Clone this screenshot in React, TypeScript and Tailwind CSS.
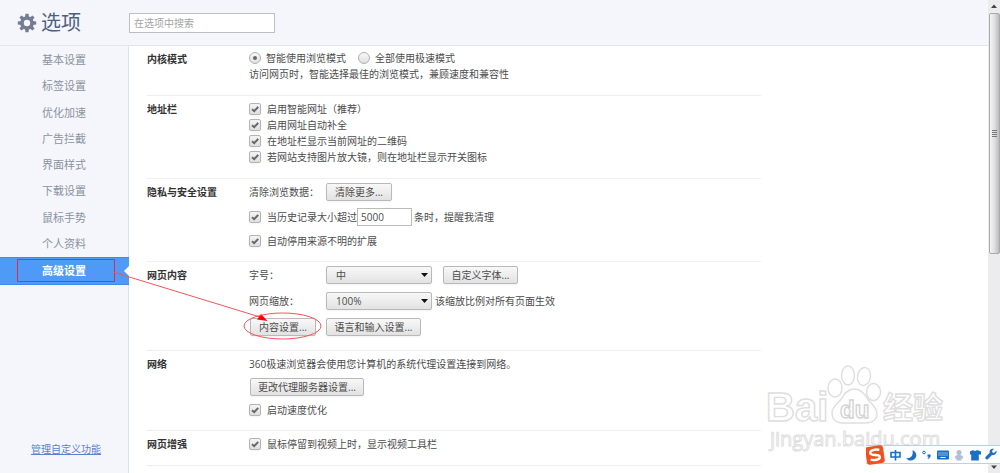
import type { ReactNode } from 'react';
import clsx from 'clsx';

const NAV_ITEMS = [
  '基本设置',
  '标签设置',
  '优化加速',
  '广告拦截',
  '界面样式',
  '下载设置',
  '鼠标手势',
  '个人资料',
  '高级设置',
];

const ACTIVE_ITEM = '高级设置';

const GEAR_TEETH = [0, 45, 90, 135, 180, 225, 270, 315];

function GearIcon() {
  return (
    <svg viewBox="0 0 20 20" className="size-5 shrink-0" aria-hidden="true">
      <g fill="#737c91">
        {GEAR_TEETH.map((angle) => (
          <path key={angle} d="M8 4.5 8.5 0.8h3L12 4.5z" transform={`rotate(${angle} 10 10)`} />
        ))}
      </g>
      <circle cx="10" cy="10" r="5" fill="none" stroke="#737c91" strokeWidth="3.6" />
    </svg>
  );
}

interface SectionProps {
  title: string;
  className?: string;
  children: ReactNode;
}

function Section({ title, className, children }: SectionProps) {
  return (
    <section className="flex border-b border-[#eeeff1]">
      <h2 className="w-[102px] shrink-0 pt-[5px] font-bold text-[#333]">{title}</h2>
      <div className={clsx('flex min-w-0 flex-1 flex-col items-start', className)}>{children}</div>
    </section>
  );
}

function Check({ children }: { children: ReactNode }) {
  return (
    <label className="flex h-4 items-center gap-[6px] whitespace-nowrap">
      <span className="relative size-3 shrink-0">
        <input
          type="checkbox"
          defaultChecked
          className="peer block size-3 appearance-none rounded-xs border border-[#b4b4b4] bg-linear-to-b from-[#f4f4f4] to-[#dedede] shadow-xs"
        />
        <svg viewBox="0 0 12 12" className="pointer-events-none absolute inset-0 hidden size-3 peer-checked:block">
          <path d="M3 6.2 5.2 8.2 9.2 3.8" fill="none" stroke="#666" strokeWidth="2" />
        </svg>
      </span>
      {children}
    </label>
  );
}

function Radio({ checked, children }: { checked?: boolean; children: ReactNode }) {
  return (
    <label className="flex h-4 items-center gap-[5px] whitespace-nowrap">
      <span className="relative size-3 shrink-0">
        <input
          type="radio"
          name="core-mode"
          defaultChecked={checked}
          className="peer block size-3 appearance-none rounded-full border border-[#b0b0b0] bg-linear-to-b from-[#f8f8f8] to-[#e0e0e0]"
        />
        <span className="pointer-events-none absolute inset-1 hidden rounded-full bg-[#666] peer-checked:block" />
      </span>
      {children}
    </label>
  );
}

function PushButton({ className, children }: { className?: string; children: ReactNode }) {
  return (
    <button
      type="button"
      className={clsx(
        'h-[18px] shrink-0 rounded-xs border border-[#b9b9b9] bg-linear-to-b from-[#f8f8f8] to-[#e2e2e2] text-center leading-4 whitespace-nowrap shadow-xs',
        className,
      )}
    >
      {children}
    </button>
  );
}

interface DropdownProps {
  id: string;
  label: string;
  options: string[];
}

function Dropdown({ id, label, options }: DropdownProps) {
  return (
    <>
      <label htmlFor={id} className="w-[77px] shrink-0">
        {label}
      </label>
      <span className="relative w-[106px] shrink-0">
        <select
          id={id}
          className="block h-[18px] w-full appearance-none rounded-xs border border-[#b9b9b9] bg-linear-to-b from-[#f8f8f8] to-[#e2e2e2] pl-[9px] leading-4 shadow-xs"
        >
          {options.map((option) => (
            <option key={option}>{option}</option>
          ))}
        </select>
        <svg viewBox="0 0 7 4" className="pointer-events-none absolute top-[7px] right-1 h-1 w-[7px]">
          <path d="M0 0h7L3.5 4z" fill="#111" />
        </svg>
      </span>
    </>
  );
}

function Sidebar() {
  return (
    <aside className="flex w-[129px] shrink-0 flex-col bg-[#f4f6fb] pt-px shadow-[inset_-1px_0_0_#dde2ea]">
      <nav>
        <ul className="flex h-[238px] flex-col justify-between">
          {NAV_ITEMS.map((item) => (
            <li key={item}>
              <a
                href="#"
                className={clsx(
                  'relative block pl-[42px] text-[11px] leading-[26px]',
                  item === ACTIVE_ITEM
                    ? 'border-y border-[#3f8aea] bg-[#509af7] font-bold text-white'
                    : 'text-[#8b93a1]',
                )}
              >
                {item}
                {item === ACTIVE_ITEM && (
                  <svg viewBox="0 0 5 10" className="absolute top-2 right-0 h-[10px] w-[5px]">
                    <path d="M5 0v10L0 5z" fill="#fff" />
                  </svg>
                )}
              </a>
            </li>
          ))}
        </ul>
      </nav>
      <a href="#" className="mt-auto mb-4 pl-[31px] text-[#5b7fd3] underline">
        管理自定义功能
      </a>
    </aside>
  );
}

function Settings() {
  return (
    <main className="min-w-0 flex-1 overflow-hidden pl-[18px]">
      <div className="max-w-[614px]">
        <Section title="内核模式" className="pt-1 pb-[13px]">
          <div className="flex gap-3">
            <Radio checked>智能使用浏览模式</Radio>
            <Radio>全部使用极速模式</Radio>
          </div>
          <p>访问网页时，智能选择最佳的浏览模式，兼顾速度和兼容性</p>
        </Section>

        <Section title="地址栏" className="pt-[5px] pb-[13px]">
          <Check>启用智能网址（推荐）</Check>
          <Check>启用网址自动补全</Check>
          <Check>在地址栏显示当前网址的二维码</Check>
          <Check>若网站支持图片放大镜，则在地址栏显示开关图标</Check>
        </Section>

        <Section title="隐私与安全设置" className="gap-[7px] pt-1 pb-3">
          <div className="flex items-center">
            <span className="w-[77px] shrink-0">清除浏览数据：</span>
            <PushButton className="w-[66px]">清除更多...</PushButton>
          </div>
          <div className="flex items-center">
            <Check>当历史记录大小超过</Check>
            <input
              type="text"
              defaultValue="5000"
              aria-label="历史记录条数"
              className="h-[18px] w-[55px] border border-[#bbb] bg-white pl-[3px]"
            />
            <span className="ml-[2px]">条时，提醒我清理</span>
          </div>
          <Check>自动停用来源不明的扩展</Check>
        </Section>

        <Section title="网页内容" className="gap-2 pt-1 pb-[14px]">
          <div className="flex items-center">
            <Dropdown id="font-size" label="字号：" options={['中', '小', '大']} />
            <PushButton className="ml-[11px] w-[75px]">自定义字体...</PushButton>
          </div>
          <div className="flex items-center">
            <Dropdown id="page-zoom" label="网页缩放：" options={['100%', '125%', '150%']} />
            <span className="ml-[3px]">该缩放比例对所有页面生效</span>
          </div>
          <div className="flex items-center gap-[10px] pl-px">
            <PushButton className="w-[66px]">内容设置...</PushButton>
            <PushButton className="w-[95px]">语言和输入设置...</PushButton>
          </div>
        </Section>

        <Section title="网络" className="gap-[6px] pt-[5px] pb-3">
          <p>360极速浏览器会使用您计算机的系统代理设置连接到网络。</p>
          <div className="pl-px">
            <PushButton className="w-[114px]">更改代理服务器设置...</PushButton>
          </div>
          <Check>启动速度优化</Check>
        </Section>

        <Section title="网页增强" className="pt-[5px] pb-[13px]">
          <Check>鼠标停留到视频上时，显示视频工具栏</Check>
        </Section>
      </div>
    </main>
  );
}

function ScrollBar() {
  return (
    <div className="flex w-3 shrink-0 flex-col items-center bg-[#ececee]" aria-hidden="true">
      <svg viewBox="0 0 12 13" className="h-[13px] w-3 shrink-0">
        <path d="M6 4.5 9 8H3z" fill="#444" />
      </svg>
      <div className="flex h-[241px] w-[11px] items-center justify-center rounded-xs border border-[#a9a9ab] bg-linear-to-r from-[#f5f5f5] via-[#dedfe1] to-[#bcbcbf]">
        <svg viewBox="0 0 5 7" className="h-[7px] w-[5px]">
          <path d="M0 .5h5M0 2.5h5M0 4.5h5M0 6.5h5" stroke="#777" />
        </svg>
      </div>
      <svg viewBox="0 0 12 13" className="mt-auto h-[13px] w-3 shrink-0">
        <path d="M3 5.5h6L6 9z" fill="#444" />
      </svg>
    </div>
  );
}

// Red box, arrow and ellipse that lead from the menu entry to the button
function Annotation() {
  return (
    <svg
      viewBox="0 0 330 345"
      className="pointer-events-none absolute top-0 left-0 h-[345px] w-[330px]"
      fill="none"
      stroke="#f5545a"
      aria-hidden="true"
    >
      <rect x="17.5" y="259.5" width="97" height="22" stroke="#d8304a" />
      <path d="M113 272 260 317" />
      <path d="M261 314 267.5 321 257 319.5z" fill="#f00" stroke="none" />
      <ellipse cx="282.5" cy="326" rx="38.5" ry="13" />
    </svg>
  );
}

function Watermark() {
  return (
    <svg
      viewBox="0 0 190 95"
      className="pointer-events-none absolute right-[50px] bottom-[18px] h-[95px] w-[190px]"
      fill="#fff"
      stroke="#dedede"
      strokeWidth="1.4"
      aria-hidden="true"
    >
      <ellipse cx="75" cy="28" rx="7" ry="9" />
      <ellipse cx="88" cy="15.5" rx="6.5" ry="9.5" />
      <ellipse cx="104" cy="16.5" rx="6.5" ry="9" transform="rotate(10 104 16.5)" />
      <ellipse cx="113.5" cy="32" rx="7" ry="8.5" />
      <text x="6" y="61" fontSize="40" fontWeight="bold" className="font-['Liberation_Sans']">
        Bai
      </text>
      <path d="M94 29c6 0 10 4 13 9 4 6 10 9 10 16 0 6-5 9-11 9H83c-7 0-11-4-11-10 0-7 6-9 10-15 3-5 6-9 12-9z" />
      <text x="80" y="58" fontSize="24" fontWeight="bold" className="font-['Liberation_Sans']" stroke="#d4d4d4">
        du
      </text>
      <text x="123" y="58" fontSize="30" fontWeight="bold">
        经验
      </text>
      <text x="10" y="86" fontSize="20" className="font-['Open_Sans']" strokeWidth="1">
        jingyan.baidu.com
      </text>
    </svg>
  );
}

function InputMethodBar() {
  return (
    <div className="absolute right-0 bottom-[9px] flex h-[19px] w-[134px] items-center border-y border-[#b9d0e6] bg-[#fbfdff]">
      <svg viewBox="0 0 134 20" className="h-5 w-[134px] shrink-0" role="img" aria-label="搜狗输入法">
        <g transform="rotate(-8 9 10)">
          <rect x="0" y="1" width="18" height="18" rx="3" fill="#f1501f" />
          <path
            d="M14 5.5C10 4 4.5 4.5 4.5 7.5c0 3.5 9 1.5 9 5 0 3-6 3-9.5 1.5"
            fill="none"
            stroke="#fff"
            strokeWidth="2.4"
          />
        </g>
        <g fill="none" stroke="#1b6fc4" strokeWidth="1.6">
          <path d="M25 7.5h9v4.5h-9zM29.5 5v10.5" />
        </g>
        <path d="M46.5 5c4.5 2 5 7 1.5 9.5-3 2-6.5 1-8-1.5 5 1 7.5-2.5 6.5-8z" fill="#1b6fc4" />
        <circle cx="58" cy="7.5" r="1.3" fill="none" stroke="#1b6fc4" />
        <path d="M61.5 9.5h3c.5 2-.5 4-2.5 4.5l-.5-.8c1-.4 1.2-.8 1-1.5h-1z" fill="#1b6fc4" />
        <rect x="71" y="5.5" width="12" height="9" rx="1" fill="#1b6fc4" />
        <path d="M72.5 8h9M72.5 10h9" stroke="#fff" strokeDasharray="1 1" />
        <path d="M74.5 12.5h5" stroke="#fff" />
        <g fill="#b3bfd3">
          <circle cx="93" cy="7.5" r="2.5" />
          <path d="M89 11.5c1-2 7-2 8 0v2h-1.5V15.5h-5V13.5H89z" />
        </g>
        <path d="M107 5c1 1.3 3 1.3 4 0l4 1.5v3h-2.2v6h-7.6v-6H104v-3z" fill="#1b6fc4" />
        <path
          d="M130.5 5.5 128 8l-1.5-.5L126 6l2-2.2c-3-.8-5 1.7-4.2 4l-4 4c-1.5 1.5.7 3.7 2.2 2.2l4-4c2.5.8 5.2-1.5 4.5-4.5z"
          fill="#1b6fc4"
        />
      </svg>
    </div>
  );
}

export default function App() {
  return (
    <div className="relative flex h-screen overflow-hidden bg-white font-['Open_Sans','Noto_Sans_CJK_SC',sans-serif] text-[10px] leading-4 text-[#4c4c4c]">
      <div className="flex min-w-0 flex-1 flex-col">
        <header className="flex h-[46px] shrink-0 items-center border-b border-[#e2e5eb] bg-[#f4f6fb] pt-px pl-[17px]">
          <div className="flex w-28 shrink-0 items-center gap-1">
            <GearIcon />
            <h1 className="text-[20px] leading-6 text-[#4f5f80]">选项</h1>
          </div>
          <input
            type="search"
            placeholder="在选项中搜索"
            aria-label="在选项中搜索"
            className="h-5 w-[146px] border border-[#bcbec3] bg-white px-1 placeholder:text-[#a3a3a3]"
          />
        </header>
        <div className="flex min-h-0 flex-1">
          <Sidebar />
          <Settings />
        </div>
      </div>
      <ScrollBar />
      <Annotation />
      <Watermark />
      <InputMethodBar />
    </div>
  );
}
